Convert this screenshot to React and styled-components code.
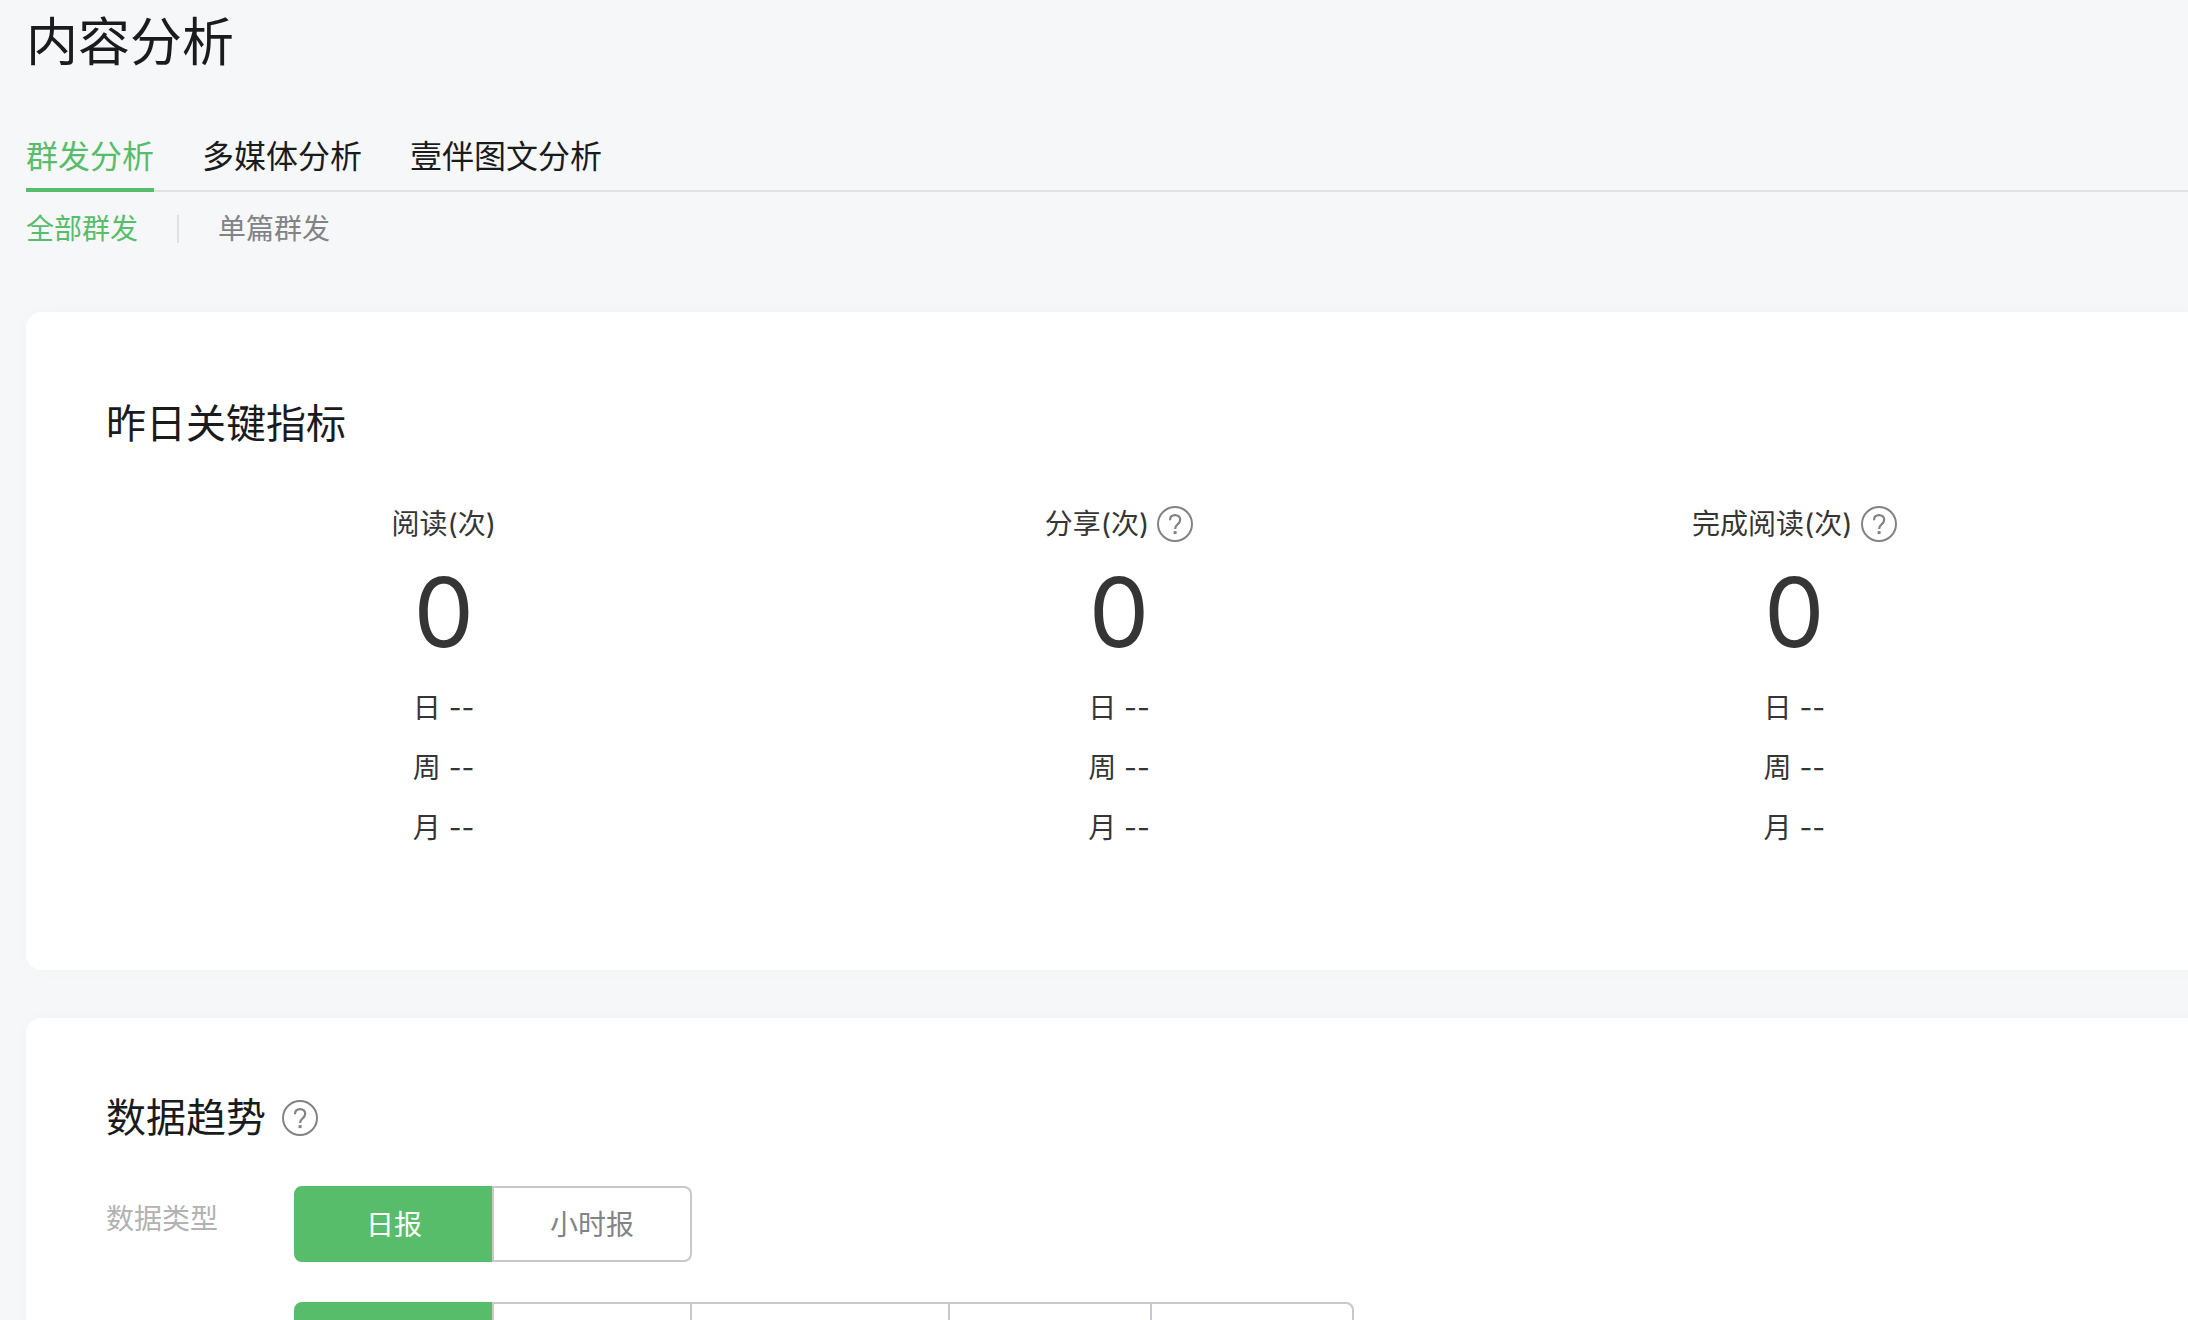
import React, { useState } from "react";
import styled, { createGlobalStyle, css } from 'styled-components'

const colors = {
  page: '#f6f7f9',
  green: '#58bd6a',
  title: '#1a1b1c',
  text: '#353535',
  grey: '#828385',
  light: '#b2b2b2',
  line: '#e0e1e3',
  border: '#c8c8cc'
}

const GlobalStyle = createGlobalStyle`
  * {
    box-sizing: border-box;
  }
  body {
    margin: 0;
    background: ${colors.page};
    color: ${colors.text};
    font-family: Inter, "Noto Sans CJK SC", sans-serif;
    font-size: 28px;
  }
  h1, h2, p {
    margin: 0;
    font-weight: 400;
  }
  button {
    font: inherit;
    cursor: pointer;
  }
`

const Page = styled.main`
  height: 100vh;
  padding: 7px 0 0 26px;
  overflow-x: hidden;
  overflow-y: auto;
  scrollbar-width: none;
`

const PageTitle = styled.h1`
  margin-bottom: 47px;
  color: ${colors.title};
  font-size: 52px;
  line-height: 72px;
`

const Tabs = styled.nav`
  display: flex;
  gap: 48px;
  box-shadow: inset 0 -2px ${colors.line};
`

const Tab = styled.a`
  border-bottom: 4px solid transparent;
  color: ${colors.title};
  font-size: 32px;
  line-height: 62px;
  text-decoration: none;
  ${props => props.$active && css`
    border-color: ${colors.green};
    color: ${colors.green};
  `}
`

const SubTabs = styled.nav`
  display: flex;
  align-items: center;
  gap: 39px;
  margin: 15px 0 61px;
`

const SubTab = styled.a`
  color: ${props => props.$active ? colors.green : colors.grey};
  line-height: 44px;
  text-decoration: none;
`

const Divider = styled.span`
  width: 2px;
  height: 28px;
  background: ${colors.line};
`

// cards run past the right edge of the window
const Card = styled.section`
  margin: 0 -24px 48px 0;
  padding: ${props => props.$top}px 80px 112px;
  border-radius: 16px;
  background: #fff;
  box-shadow: 0 0 20px rgba(0, 0, 0, 0.02);
`

const CardHeader = styled.header`
  display: flex;
  align-items: center;
  gap: 16px;
`

const CardTitle = styled.h2`
  color: ${colors.title};
  font-size: 40px;
  line-height: 64px;
`

const HelpButton = styled.button`
  display: flex;
  padding: 0;
  border: 0;
  background: none;
  color: ${colors.grey};
`

const Metrics = styled.div`
  display: grid;
  grid-template-columns: repeat(3, 1fr);
  margin-top: 48px;
`

const MetricColumn = styled.article`
  display: flex;
  flex-direction: column;
  align-items: center;
`

const MetricLabel = styled.div`
  display: flex;
  align-items: center;
  gap: 8px;
  line-height: 40px;
`

const MetricValue = styled.p`
  margin: 20px 0 18px;
  font-size: 96px;
  line-height: 96px;
`

const Change = styled.p`
  line-height: 60px;
`

const FilterRow = styled.div`
  display: flex;
  align-items: flex-start;
  margin-top: ${props => props.$first ? 36 : 40}px;
`

const FilterLabel = styled.span`
  width: 188px;
  color: ${colors.light};
  line-height: 66px;
`

const Segments = styled.div`
  display: flex;
`

const Segment = styled.button`
  width: ${props => props.$width}px;
  height: 76px;
  padding: 0 0 2px;
  border: 2px solid ${colors.border};
  background: #fff;
  color: ${colors.grey};
  & + & {
    margin-left: -2px;
  }
  &:first-child {
    border-radius: 8px 0 0 8px;
  }
  &:last-child {
    border-radius: 0 8px 8px 0;
  }
  ${props => props.$active && css`
    border-color: ${colors.green};
    background: ${colors.green};
    color: #fff;
  `}
`

const tabs = ['群发分析', '多媒体分析', '壹伴图文分析']

const metrics = [
  { label: '阅读(次)', value: 0 },
  { label: '分享(次)', value: 0, help: true },
  { label: '完成阅读(次)', value: 0, help: true }
]

const periods = ['日', '周', '月']

const reportTypes = [
  { text: '日报', width: 200 },
  { text: '小时报', width: 200 }
]

const channels = [
  { width: 200 },
  { width: 200 },
  { width: 260 },
  { width: 204 },
  { width: 204 }
]

const Help = () => (
  <HelpButton type="button" aria-label="说明">
    <svg width="36" height="36" viewBox="0 0 36 36" fill="none" stroke="currentColor" strokeWidth="2">
      <circle cx="18" cy="18" r="17" />
      <path d="M13 14.2c0-3.2 2.1-5.1 5.1-5.1s5.1 1.9 5.1 4.7c0 2.2-1.1 3.3-2.6 4.5-1.6 1.3-2.5 2.2-2.5 4.7" strokeWidth="2.2" />
      <path d="M16.6 26.6h3" strokeWidth="3" />
    </svg>
  </HelpButton>
)

const Metric = ({ label, value, help }) => (
  <MetricColumn>
    <MetricLabel>
      <span>{label}</span>
      {help && <Help />}
    </MetricLabel>
    <MetricValue>{value}</MetricValue>
    {periods.map(period => <Change key={period}>{period} --</Change>)}
  </MetricColumn>
)

const SegmentGroup = ({ items, label }) => {
  const [selected, setSelected] = useState(0)
  return (
    <Segments role="group" aria-label={label}>
      {items.map((item, i) => (
        <Segment
          key={i}
          type="button"
          $width={item.width}
          $active={i === selected}
          aria-pressed={i === selected}
          aria-label={item.text ? undefined : `${label} ${i + 1}`}
          onClick={() => setSelected(i)}>
          {item.text}
        </Segment>
      ))}
    </Segments>
  )
}

const App = () => {
  return (
    <>
      <GlobalStyle />
      <Page>
        <PageTitle>内容分析</PageTitle>
        <Tabs>
          {tabs.map((tab, i) => <Tab key={tab} href="#" $active={i === 0}>{tab}</Tab>)}
        </Tabs>
        <SubTabs>
          <SubTab href="#" $active>全部群发</SubTab>
          <Divider />
          <SubTab href="#">单篇群发</SubTab>
        </SubTabs>
        <Card $top={80}>
          <CardTitle>昨日关键指标</CardTitle>
          <Metrics>
            {metrics.map(metric => <Metric key={metric.label} {...metric} />)}
          </Metrics>
        </Card>
        <Card $top={68}>
          <CardHeader>
            <CardTitle>数据趋势</CardTitle>
            <Help />
          </CardHeader>
          <FilterRow $first>
            <FilterLabel>数据类型</FilterLabel>
            <SegmentGroup items={reportTypes} label="数据类型" />
          </FilterRow>
          <FilterRow>
            <FilterLabel />
            <SegmentGroup items={channels} label="渠道" />
          </FilterRow>
        </Card>
      </Page>
    </>
  )
}

export default App
